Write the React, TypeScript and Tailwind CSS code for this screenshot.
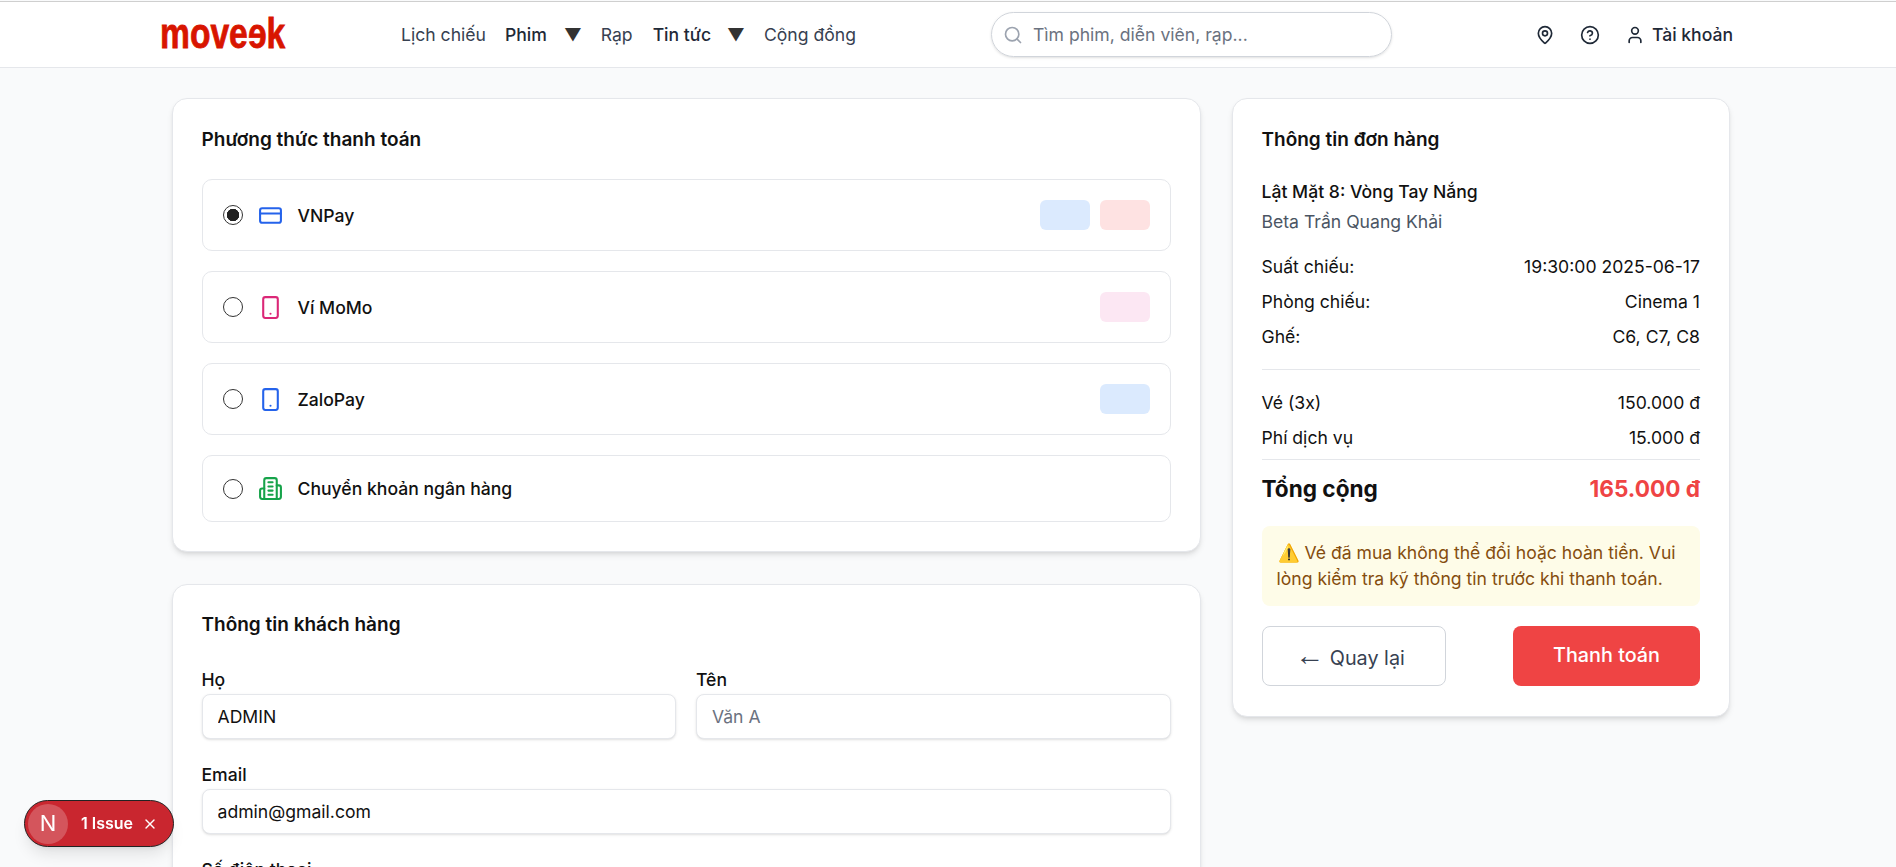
import React from 'react';
import { CreditCard, Smartphone, Search, MapPin, CircleHelp, User, X } from 'lucide-react';

const inter = { fontFamily: 'Inter, "Noto Sans", sans-serif' };

function BankIcon() {
    return (
        <svg viewBox="0 0 24 24" fill="none" stroke="currentColor" strokeWidth="2" strokeLinecap="round" strokeLinejoin="round" className="size-[25px] text-[#16a34a]">
            <path d="M6 22V4a2 2 0 0 1 2-2h8a2 2 0 0 1 2 2v18Z" />
            <path d="M6 12H4a2 2 0 0 0-2 2v6a2 2 0 0 0 2 2h2" />
            <path d="M18 9h2a2 2 0 0 1 2 2v9a2 2 0 0 1-2 2h-2" />
            <path d="M10 6h4" />
            <path d="M10 10h4" />
            <path d="M10 14h4" />
            <path d="M10 18h4" />
        </svg>
    );
}

function Row({ checked, icon, label, badges }: { checked?: boolean; icon: React.ReactNode; label: string; badges?: string[] }) {
    return (
        <label className="flex items-center justify-between rounded-[10px] border border-[#e5e7eb] p-5">
            <div className="flex items-center gap-[15px]">
                <input
                    type="radio"
                    name="pay"
                    defaultChecked={checked}
                    className="appearance-none size-5 m-0 rounded-full border border-[#333] bg-white checked:bg-[radial-gradient(circle,#222_6px,#fff_6.5px)]"
                />
                {icon}
                <span className="font-medium text-[#111] leading-[25px]">{label}</span>
            </div>
            {badges && (
                <div className="flex gap-[10px]">
                    {badges.map((b, i) => (
                        <div key={i} className={`h-[30px] w-[50px] rounded-md ${b}`} />
                    ))}
                </div>
            )}
        </label>
    );
}

function Field({ label, value, placeholder }: { label: string; value?: string; placeholder?: string }) {
    return (
        <div>
            <div className="font-medium text-[#111] h-[25px] leading-[25px] mb-[2px]">{label}</div>
            <input
                readOnly
                value={value ?? ''}
                placeholder={placeholder}
                className="block w-full h-[45px] rounded-lg border border-[#e5e7eb] bg-white px-[15px] text-[17.6px] text-[#111] shadow-sm placeholder:text-[#6b7280] outline-none"
            />
        </div>
    );
}

function Line({ left, right }: { left: string; right: string }) {
    return (
        <div className="flex justify-between h-[35px] items-center text-[#111]">
            <span>{left}</span>
            <span>{right}</span>
        </div>
    );
}

export default function App() {
    return (
        <div className="h-[867px] overflow-hidden bg-[#f9fafb] leading-[25.6px] text-[17.6px]" style={inter}>
            {/* Header */}
            <header className="h-[67px] bg-white border-t border-t-[#cfcfcf] border-b border-b-[#e5e7eb] mt-px flex items-center pl-[160px]">
                <div className="w-[241px] h-[65px] flex items-center">
                    <div
                        className="flex text-[#d81500] font-bold text-[42px] leading-none origin-left scale-x-[0.8] -translate-y-[1px] [-webkit-text-stroke:0.8px_#d81500]"
                        style={{ fontFamily: '"Liberation Sans", sans-serif' }}
                    >
                        <span>move</span>
                        <span className="inline-block scale-x-[-1]">e</span>
                        <span>k</span>
                    </div>
                </div>
                <nav className="flex items-center text-[#374151]">
                    <span className="mr-[19px]">Lịch chiếu</span>
                    <span className="font-medium text-[#1f2937]">Phim</span>
                    <span className="ml-[17px] mr-[19px] text-[#333]">▼</span>
                    <span className="mr-[20px]">Rạp</span>
                    <span className="font-medium text-[#1f2937]">Tin tức</span>
                    <span className="ml-[16px] mr-[19px] text-[#333]">▼</span>
                    <span>Cộng đồng</span>
                </nav>
                <div className="ml-[135px] w-[401px] h-[45px] rounded-full border border-[#d1d5db] shadow-sm flex items-center pl-[11px] gap-[10px] text-[#6b7280]">
                    <Search className="size-5 text-[#9ca3af]" />
                    <span>Tìm phim, diễn viên, rạp...</span>
                </div>
                <div className="ml-[143px] flex items-center text-[#1f2937]">
                    <MapPin className="size-5" />
                    <CircleHelp className="size-5 ml-[25px]" />
                    <User className="size-5 ml-[25px]" />
                    <span className="ml-[7px] font-medium">Tài khoản</span>
                </div>
            </header>

            <main className="pl-[171.5px] pt-[30px] grid grid-cols-[1029px_498.5px] gap-[31px] items-start">
                <div className="flex flex-col gap-[32px]">
                    <section className="bg-white rounded-[15px] border border-[#e5e7eb] shadow-md p-[29px]">
                        <h2 className="text-[19px] leading-[22px] pt-px font-semibold text-[#111] mb-[28px]">Phương thức thanh toán</h2>
                        <div className="flex flex-col gap-5">
                            <Row checked icon={<CreditCard className="size-[25px] text-[#2563eb]" />} label="VNPay" badges={['bg-[#dbeafe]', 'bg-[#fee2e2]']} />
                            <Row icon={<Smartphone className="size-[25px] text-[#db2777]" />} label="Ví MoMo" badges={['bg-[#fce7f3]']} />
                            <Row icon={<Smartphone className="size-[25px] text-[#2563eb]" />} label="ZaloPay" badges={['bg-[#dbeafe]']} />
                            <Row icon={<BankIcon />} label="Chuyển khoản ngân hàng" />
                        </div>
                    </section>
                    <section className="bg-white rounded-[15px] border border-[#e5e7eb] shadow-md p-[29px]">
                        <h2 className="text-[19px] leading-[22px] font-semibold text-[#111] mb-[31px]">Thông tin khách hàng</h2>
                        <div className="grid grid-cols-2 gap-x-5 mb-[23px]">
                            <Field label="Họ" value="ADMIN" />
                            <Field label="Tên" placeholder="Văn A" />
                        </div>
                        <div className="mb-[23px]">
                            <Field label="Email" value="admin@gmail.com" />
                        </div>
                        <Field label="Số điện thoại" value="" />
                    </section>
                </div>

                <aside className="bg-white rounded-[15px] border border-[#e5e7eb] shadow-md p-[29px] h-[619px]">
                    <h2 className="text-[19px] leading-[22px] pt-px font-semibold text-[#111] mb-[26px]">Thông tin đơn hàng</h2>
                    <div className="font-medium text-[#111] h-[30px] flex items-center">Lật Mặt 8: Vòng Tay Nắng</div>
                    <div className="text-[#4b5563] h-[30px] flex items-center mb-[12px]">Beta Trần Quang Khải</div>
                    <Line left="Suất chiếu:" right="19:30:00 2025-06-17" />
                    <Line left="Phòng chiếu:" right="Cinema 1" />
                    <Line left="Ghế:" right="C6, C7, C8" />
                    <div className="border-t border-[#e5e7eb] mt-[15px] mb-[15px]" />
                    <Line left="Vé (3x)" right="150.000 đ" />
                    <Line left="Phí dịch vụ" right="15.000 đ" />
                    <div className="border-t border-[#e5e7eb] mt-[4px]" />
                    <div className="flex justify-between items-center h-[57px] text-[22.6px] font-bold">
                        <span className="text-[#111]">Tổng cộng</span>
                        <span className="text-[#ef4444]">165.000 đ</span>
                    </div>
                    <div className="mt-[9px] h-[80px] rounded-lg bg-[#fefce8] px-[15px] py-[14px] text-[#854d0e] indent-[1px]">
                        ⚠️ Vé đã mua không thể đổi hoặc hoàn tiền. Vui lòng kiểm tra kỹ thông tin trước khi thanh toán.
                    </div>
                    <div className="flex justify-between mt-[20px]">
                        <button className="w-[184px] h-[60px] pr-[7px] rounded-lg border border-[#d1d5db] bg-white text-[19.8px] text-[#374151]">
                            <span className="text-[29px] leading-none" style={{ fontFamily: '"Liberation Sans", sans-serif' }}>←</span> Quay lại
                        </button>
                        <button className="w-[187px] h-[60px] rounded-lg bg-[#ef4444] text-[19.8px] font-medium text-white">Thanh toán</button>
                    </div>
                </aside>
            </main>

            {/* Next.js dev indicator */}
            <div className="fixed left-[24px] top-[800px] w-[150px] h-[47px] rounded-full bg-[#c9262f] border border-[#222] shadow-lg flex items-center pl-[3px] text-white">
                <div className="size-10 rounded-full bg-[#d4555c] flex items-center justify-center text-[22px]">N</div>
                <span className="ml-[13px] text-[16px] font-semibold">1 Issue</span>
                <X className="size-4 ml-[9px]" />
            </div>
        </div>
    );
}
